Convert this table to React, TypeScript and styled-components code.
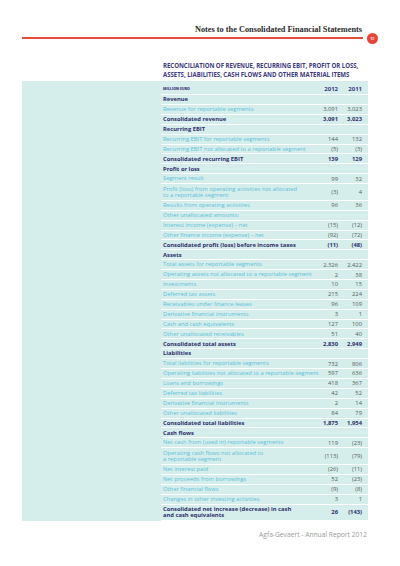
import React from "react";
import styled, { createGlobalStyle } from "styled-components";

type Kind = "section" | "item" | "total";

interface Row {
  label: React.ReactNode;
  kind: Kind;
  y12?: string;
  y11?: string;
  tall?: boolean;
}

const rows: Row[] = [
  { label: "Revenue", kind: "section" },
  { label: "Revenue for reportable segments", kind: "item", y12: "3,091", y11: "3,023" },
  { label: "Consolidated revenue", kind: "total", y12: "3,091", y11: "3,023" },
  { label: "Recurring EBIT", kind: "section" },
  { label: "Recurring EBIT for reportable segments", kind: "item", y12: "144", y11: "132" },
  { label: "Recurring EBIT not allocated to a reportable segment", kind: "item", y12: "(5)", y11: "(3)" },
  { label: "Consolidated recurring EBIT", kind: "total", y12: "139", y11: "129" },
  { label: "Profit or loss", kind: "section" },
  { label: "Segment result", kind: "item", y12: "99", y11: "32" },
  {
    label: (
      <>
        Profit (loss) from operating activities not allocated
        <br />
        to a reportable segment
      </>
    ),
    kind: "item",
    y12: "(3)",
    y11: "4",
    tall: true,
  },
  { label: "Results from operating activities", kind: "item", y12: "96", y11: "36" },
  { label: "Other unallocated amounts:", kind: "item" },
  { label: "Interest income (expense) – net", kind: "item", y12: "(15)", y11: "(12)" },
  { label: "Other finance income (expense) – net", kind: "item", y12: "(92)", y11: "(72)" },
  { label: "Consolidated profit (loss) before income taxes", kind: "total", y12: "(11)", y11: "(48)" },
  { label: "Assets", kind: "section" },
  { label: "Total assets for reportable segments", kind: "item", y12: "2,326", y11: "2,422" },
  { label: "Operating assets not allocated to a reportable segment", kind: "item", y12: "2", y11: "38" },
  { label: "Investments", kind: "item", y12: "10", y11: "15" },
  { label: "Deferred tax assets", kind: "item", y12: "215", y11: "224" },
  { label: "Receivables under finance leases", kind: "item", y12: "96", y11: "109" },
  { label: "Derivative financial instruments", kind: "item", y12: "3", y11: "1" },
  { label: "Cash and cash equivalents", kind: "item", y12: "127", y11: "100" },
  { label: "Other unallocated receivables", kind: "item", y12: "51", y11: "40" },
  { label: "Consolidated total assets", kind: "total", y12: "2,830", y11: "2,949" },
  { label: "Liabilities", kind: "section" },
  { label: "Total liabilities for reportable segments", kind: "item", y12: "732", y11: "806" },
  { label: "Operating liabilities not allocated to a reportable segment", kind: "item", y12: "597", y11: "636" },
  { label: "Loans and borrowings", kind: "item", y12: "418", y11: "367" },
  { label: "Deferred tax liabilities", kind: "item", y12: "42", y11: "52" },
  { label: "Derivative financial instruments", kind: "item", y12: "2", y11: "14" },
  { label: "Other unallocated liabilities", kind: "item", y12: "84", y11: "79" },
  { label: "Consolidated total liabilities", kind: "total", y12: "1,875", y11: "1,954" },
  { label: "Cash flows", kind: "section" },
  { label: "Net cash from (used in) reportable segments", kind: "item", y12: "119", y11: "(23)" },
  {
    label: (
      <>
        Operating cash flows not allocated to
        <br />a reportable segment
      </>
    ),
    kind: "item",
    y12: "(113)",
    y11: "(79)",
    tall: true,
  },
  { label: "Net interest paid", kind: "item", y12: "(26)", y11: "(11)" },
  { label: "Net proceeds from borrowings", kind: "item", y12: "52", y11: "(23)" },
  { label: "Other financial flows", kind: "item", y12: "(9)", y11: "(8)" },
  { label: "Changes in other investing activities", kind: "item", y12: "3", y11: "1" },
  {
    label: (
      <>
        Consolidated net increase (decrease) in cash
        <br />
        and cash equivalents
      </>
    ),
    kind: "total",
    y12: "26",
    y11: "(143)",
    tall: true,
  },
];

export default function App(): JSX.Element {
  return (
    <Page>
      <GlobalStyle />
      <Header>
        <HeaderTitle>Notes to the Consolidated Financial Statements</HeaderTitle>
        <RuleRow>
          <Rule />
          <PageBadge>92</PageBadge>
        </RuleRow>
      </Header>

      <Title>
        Reconciliation of revenue, recurring EBIT, profit or loss,
        <br />
        assets, liabilities, cash flows and other material items
      </Title>

      <Panel>
        <Table>
          <HeadRow>
            <Unit>Million Euro</Unit>
            <Year>2012</Year>
            <Year>2011</Year>
          </HeadRow>
          {rows.map((r, i) => (
            <TableRow key={i} $tall={r.tall}>
              <Label $kind={r.kind}>{r.label}</Label>
              <Num $bold={r.kind === "total"}>{r.y12}</Num>
              <Num $bold={r.kind === "total"}>{r.y11}</Num>
            </TableRow>
          ))}
        </Table>
      </Panel>

      <Footer>Agfa-Gevaert - Annual Report 2012</Footer>
    </Page>
  );
}

const GlobalStyle = createGlobalStyle`
  html, body {
    margin: 0;
    padding: 0;
    background: #ffffff;
  }
  body {
    font-family: "Open Sans", "DejaVu Sans", sans-serif;
  }
`;

const Page = styled.div`
  width: 400px;
  height: 566px;
  overflow: hidden;
  background: #fff;
`;

const Header = styled.header`
  padding: 26px 0 0 22px;
`;

const HeaderTitle = styled.div`
  font-family: "Liberation Serif", "DejaVu Serif", serif;
  font-weight: bold;
  font-size: 8.3px;
  line-height: 8px;
  color: #2b2b2b;
  text-align: right;
  padding-right: 38px;
`;

const RuleRow = styled.div`
  display: flex;
  align-items: center;
  margin-top: -1.5px;
  padding-right: 22px;
`;

const Rule = styled.div`
  flex: 1;
  height: 1.4px;
  background: #e84a3c;
`;

const PageBadge = styled.div`
  width: 11px;
  height: 11px;
  margin-left: 4px;
  border-radius: 50%;
  background: #e8453a;
  color: #fff;
  font-size: 3.5px;
  font-weight: 600;
  display: flex;
  align-items: center;
  justify-content: center;
`;

const Title = styled.h2`
  margin: 17px 0 0 163px;
  font-size: 6.1px;
  line-height: 9.3px;
  font-weight: 700;
  text-transform: uppercase;
  color: #3d3a7e;
  letter-spacing: -0.05px;
  white-space: nowrap;
`;

const Panel = styled.section`
  margin: 2px 32px 0 22px;
  background: #d6eeeb;
  padding-left: 139px;
`;

const Table = styled.div`
  display: flex;
  flex-direction: column;
`;

const HeadRow = styled.div`
  display: grid;
  grid-template-columns: 155px 22px 24px;
  align-items: center;
  height: 11px;
  padding-top: 2px;
  border-bottom: 1px solid #fff;
`;

const Unit = styled.div`
  padding-left: 2px;
  font-size: 3.6px;
  font-weight: 800;
  text-transform: uppercase;
  color: #3d3a7e;
`;

const Year = styled.div`
  text-align: right;
  font-size: 6px;
  font-weight: 700;
  color: #3d3a7e;
`;

const TableRow = styled.div<{ $tall?: boolean }>`
  display: grid;
  grid-template-columns: 155px 22px 24px;
  align-items: center;
  height: ${(p) => (p.$tall ? 15.8 : 8.9)}px;
  border-bottom: 1px solid #fff;
`;

const Label = styled.div<{ $kind: Kind }>`
  padding-left: 2px;
  white-space: nowrap;
  font-size: 5.8px;
  line-height: 6.5px;
  font-weight: ${(p) => (p.$kind === "item" ? 400 : 700)};
  color: ${(p) => (p.$kind === "item" ? "#58c0da" : "#2f2d6c")};
`;

const Num = styled.div<{ $bold?: boolean }>`
  text-align: right;
  white-space: nowrap;
  font-size: 5.8px;
  font-weight: ${(p) => (p.$bold ? 700 : 400)};
  color: ${(p) => (p.$bold ? "#2f2d6c" : "#555a5c")};
`;

const Footer = styled.footer`
  margin: 9px 33px 0 0;
  text-align: right;
  font-size: 6.7px;
  color: #9b9b9b;
`;
